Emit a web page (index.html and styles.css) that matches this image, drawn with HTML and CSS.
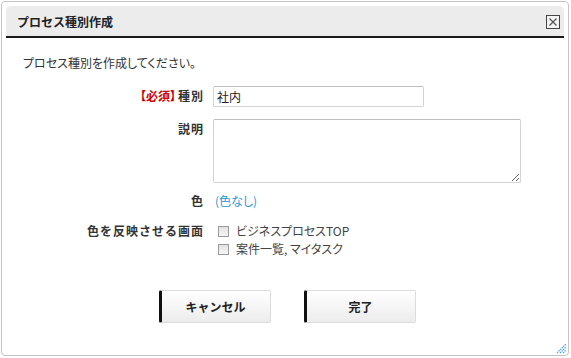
FILE: index.html
```
<!DOCTYPE html>
<html>
<head>
  <title>プロセス種別作成</title>
  <link rel="stylesheet" href="styles.css">
</head>
<body>
  <div class="dialog">
    <div class="dialog-header">
      <span class="dialog-title">プロセス種別作成</span>
      <span class="close-btn">
        <svg width="14" height="14" viewBox="0 0 14 14">
          <rect x="0.5" y="0.5" width="13" height="13" fill="#f4f4f4" stroke="#444"/>
          <path d="M3.5 3.5 L10.5 10.5 M10.5 3.5 L3.5 10.5" stroke="#555" stroke-width="1.2"/>
        </svg>
      </span>
    </div>

    <div class="dialog-body">
      <p class="intro">プロセス種別を作成してください。</p>

      <div class="form">
        <div class="label"><span class="required">【必須】</span>種別</div>
        <div class="field"><input type="text" class="text-input" value="社内"></div>

        <div class="label">説明</div>
        <div class="field"><textarea class="text-area"></textarea></div>

        <div class="label label-color">色</div>
        <div class="field field-color"><a class="color-link">(色なし)</a></div>

        <div class="label label-screens">色を反映させる画面</div>
        <div class="field field-screens">
          <label class="check"><span class="box"></span>ビジネスプロセスTOP</label>
          <label class="check"><span class="box"></span>案件一覧, マイタスク</label>
        </div>
      </div>

      <div class="buttons">
        <button class="btn">キャンセル</button>
        <button class="btn">完了</button>
      </div>
    </div>

    <svg class="grip" width="11" height="11" viewBox="0 0 11 11">
      <path d="M1 10 L10 1 M4 10 L10 4 M7 10 L10 7" stroke="#4aa3df" stroke-width="1.2" stroke-dasharray="1.5 0.7"/>
    </svg>
  </div>
</body>
</html>
```

FILE: styles.css
```
body {
  margin: 0;
  padding: 0;
  background: #fff;
  font-family: "Noto Sans CJK JP", "DejaVu Sans", sans-serif;
  font-size: 12px;
  color: #333;
}
.dialog {
  position: relative;
  box-sizing: border-box;
  width: 568px;
  height: 355px;
  margin: 1px 0 0 1px;
  padding: 4px;
  border: 1px solid #c4c4c4;
  border-radius: 4px;
  background: #fff;
}
.dialog-header {
  display: flex;
  align-items: center;
  justify-content: space-between;
  height: 30px;
  padding: 0 4px 0 11px;
  background: #ececec;
  border-radius: 5px 5px 0 0;
  border-bottom: 2px solid #1a1a1a;
}
.dialog-title {
  font-weight: bold;
  font-size: 12px;
  color: #222;
}
.close-btn {
  display: flex;
  width: 14px;
  height: 14px;
  margin-top: 1px;
}
.dialog-body {
  padding: 16px 0 0 17px;
}
.intro {
  margin: 0;
  line-height: 17px;
  color: #333;
  font-feature-settings: "palt";
}
.form {
  display: grid;
  grid-template-columns: 181px 1fr;
  column-gap: 9px;
  margin-top: 15px;
}
.label {
  text-align: right;
  font-weight: bold;
  line-height: 20px;
  letter-spacing: 1px;
  color: #333;
}
.required {
  color: #cc0000;
  letter-spacing: 0;
  font-feature-settings: "palt";
  margin-right: 2px;
}
.field {
  margin-bottom: 12px;
}
.text-input {
  display: block;
  box-sizing: border-box;
  width: 211px;
  height: 21px;
  padding: 1px 3px;
  border: 1px solid #d4d4d4;
  border-top-color: #bdbdbd;
  border-radius: 2px;
  font-family: inherit;
  font-size: 12px;
  color: #222;
}
.text-area {
  display: block;
  box-sizing: border-box;
  width: 308px;
  height: 64px;
  border: 1px solid #d4d4d4;
  border-top-color: #bdbdbd;
  border-radius: 2px;
  font-family: inherit;
  font-size: 12px;
}
.label-color, .field-color {
  margin-top: -4px;
  margin-bottom: 11px;
}
.color-link {
  display: block;
  line-height: 20px;
  padding-left: 2px;
  color: #2c98d4;
  font-feature-settings: "palt";
}
.field-screens {
  display: flex;
  flex-direction: column;
  padding-left: 5px;
  margin-bottom: 0;
}
.check {
  display: flex;
  align-items: center;
  gap: 7px;
  height: 18px;
  line-height: 18px;
  color: #444;
  font-feature-settings: "palt";
}
.label-screens {
  margin-top: -1px;
}
.box {
  box-sizing: border-box;
  width: 11px;
  height: 11px;
  border: 1px solid #9a9a9a;
  background: linear-gradient(#e2e2e2, #f6f6f6);
}
.buttons {
  display: flex;
  justify-content: center;
  gap: 33px;
  margin: 32px 0 0 -13px;
}
.btn {
  box-sizing: border-box;
  width: 112px;
  height: 33px;
  border: 1px solid #dcdcdc;
  border-left: 3px solid #111;
  border-radius: 2px;
  background: linear-gradient(#ffffff, #ececec);
  font-family: inherit;
  font-size: 12px;
  font-weight: bold;
  color: #222;
}
.grip {
  position: absolute;
  right: 1px;
  bottom: 1px;
}
```
